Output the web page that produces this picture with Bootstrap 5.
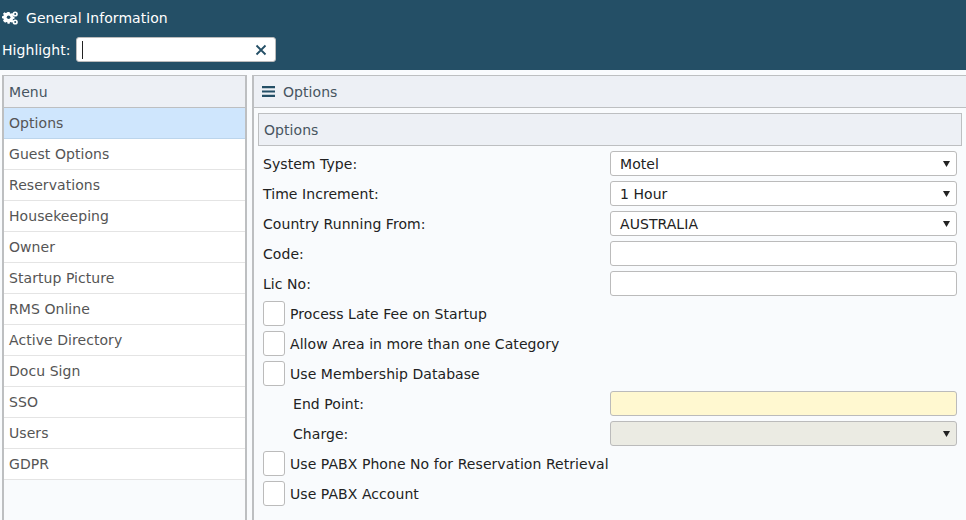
<!DOCTYPE html>
<html lang="en">
<head>
<meta charset="utf-8">
<title>General Information</title>
<link href="https://cdn.jsdelivr.net/npm/bootstrap@5.3.0/dist/css/bootstrap.min.css" rel="stylesheet">
<style>
html,body{height:520px;overflow:hidden}
body{background:#f9fbfd;font-family:"DejaVu Sans",sans-serif;font-size:14px;color:#222;line-height:20px;letter-spacing:.06px}
.app-top{background:#244f66;height:70px;color:#fff;padding:0 2px}
.app-title{height:36px;gap:8px;font-size:14px}
.app-title svg{width:16px;height:14px;flex:none}
.app-hl{gap:5px;font-size:14px;padding-top:1px}
.app-hl-box{width:200px;height:25px;background:#fff;border:1px solid #bbb;border-radius:3px;padding:0 8px 0 5px}
.caret-bar{width:1px;height:18px;background:#222}
.app-main{padding:5px 0 0 2px;gap:5px;height:450px}
.menu-col{width:245px;flex:none;border:solid #bdbfc1;border-width:1px 2px 0 2px}
.menu-head{height:32px;background:#edf0f5;border-bottom:1px solid #bdbfc1;padding:0 5px;color:#47555f;display:flex;align-items:center}
.menu-list .list-group-item{height:31px;padding:0 5px;background:#fff;border:0;border-bottom:1px solid #e4e4e4;color:#555;font-size:14px;line-height:30px;border-radius:0}
.menu-list .list-group-item.active{background:#cfe6fd;color:#555;border-bottom-color:#bcd5ec}
.pane{flex:1;border-left:2px solid #bdbfc1;min-width:0}
.pane-head{height:33px;border-top:1px solid #bdbfc1;border-bottom:1px solid #bdbfc1;background:#edf0f5;color:#47555f;gap:8px;padding-left:8px}
.pane-head svg{width:13px;height:11px}
.pane-body{padding:5px 4px 0 4px}
.sect{height:33px;border:1px solid #bdbfc1;background:#edf0f5;color:#47555f;padding:0 5px;margin-bottom:5px}
.frow{height:25px;margin-bottom:5px;padding:0 5px;display:flex;align-items:center}
.frow-label{flex:1;min-width:0;white-space:nowrap}
.frow-in{padding-left:30px}
.fctl{width:347px;height:25px;flex:none;background:#fff;border:1px solid #bbb;border-radius:3px;padding:0 9px;color:#222;display:flex;align-items:center;justify-content:space-between;font-size:14px}
.fctl-note{background:#fff8d0}
.fctl-off{background:#ebebe3}
.fctl-arrow{width:7px;height:7px;flex:none;margin-right:-3px}
.cbx{width:22px;height:25px;flex:none;background:#fff;border:1px solid #bbb;border-radius:3px;margin-right:5px}
</style>
</head>
<body>
<header class="app-top">
  <div class="app-title d-flex align-items-center">
    <svg viewBox="0 0 16 14" aria-hidden="true"><g fill="#fff"><path d="M5.6 2.4h2l.3 1.4 1 .4 1.2-.8 1.4 1.4-.8 1.2.4 1 1.4.3v2l-1.4.3-.4 1 .8 1.2-1.4 1.4-1.2-.8-1 .4-.3 1.4h-2l-.3-1.4-1-.4-1.2.8L1 11.2l.8-1.2-.4-1L0 8.7v-2l1.4-.3.4-1L1 4.2l1.400-1.400 1.200.8 1-.4z" transform="translate(0 -1.500)"/><circle cx="13.200" cy="3" r="2.600"/><circle cx="13.200" cy="11" r="2.600"/></g><circle cx="6.600" cy="6.200" r="1.800" fill="#244f66"/><circle cx="13.200" cy="3" r="1" fill="#244f66"/><circle cx="13.200" cy="11" r="1" fill="#244f66"/></svg>
    <span>General Information</span>
  </div>
  <div class="app-hl d-flex align-items-center">
    <label>Highlight:</label>
    <div class="app-hl-box d-flex align-items-center justify-content-between">
      <span class="caret-bar"></span>
      <svg width="12" height="12" viewBox="0 0 12 12" aria-hidden="true"><path d="M1.500 1.500l9 9M10.500 1.500l-9 9" stroke="#244f66" stroke-width="1.800" fill="none"/></svg>
    </div>
  </div>
</header>
<main class="app-main d-flex">
  <aside class="menu-col">
    <div class="menu-head">Menu</div>
    <div class="list-group menu-list">
      <a class="list-group-item active">Options</a>
      <a class="list-group-item">Guest Options</a>
      <a class="list-group-item">Reservations</a>
      <a class="list-group-item">Housekeeping</a>
      <a class="list-group-item">Owner</a>
      <a class="list-group-item">Startup Picture</a>
      <a class="list-group-item">RMS Online</a>
      <a class="list-group-item">Active Directory</a>
      <a class="list-group-item">Docu Sign</a>
      <a class="list-group-item">SSO</a>
      <a class="list-group-item">Users</a>
      <a class="list-group-item">GDPR</a>
    </div>
  </aside>
  <section class="pane">
    <div class="pane-head d-flex align-items-center">
      <svg viewBox="0 0 13 11" aria-hidden="true"><path d="M0 0h13v2.200H0zM0 4.400h13v2.200H0zM0 8.800h13V11H0z" fill="#244f66"/></svg>
      <span>Options</span>
    </div>
    <div class="pane-body">
      <div class="sect d-flex align-items-center">Options</div>
      <div class="frow"><span class="frow-label">System Type:</span><div class="fctl"><span>Motel</span><svg class="fctl-arrow" viewBox="0 0 7 7"><path d="M0 1h7L3.500 7z" fill="#222"/></svg></div></div>
      <div class="frow"><span class="frow-label">Time Increment:</span><div class="fctl"><span>1 Hour</span><svg class="fctl-arrow" viewBox="0 0 7 7"><path d="M0 1h7L3.500 7z" fill="#222"/></svg></div></div>
      <div class="frow"><span class="frow-label">Country Running From:</span><div class="fctl"><span>AUSTRALIA</span><svg class="fctl-arrow" viewBox="0 0 7 7"><path d="M0 1h7L3.500 7z" fill="#222"/></svg></div></div>
      <div class="frow"><span class="frow-label">Code:</span><div class="fctl"></div></div>
      <div class="frow"><span class="frow-label">Lic No:</span><div class="fctl"></div></div>
      <div class="frow"><span class="cbx"></span><span class="frow-label">Process Late Fee on Startup</span></div>
      <div class="frow"><span class="cbx"></span><span class="frow-label">Allow Area in more than one Category</span></div>
      <div class="frow"><span class="cbx"></span><span class="frow-label">Use Membership Database</span></div>
      <div class="frow"><span class="frow-label frow-in">End Point:</span><div class="fctl fctl-note"></div></div>
      <div class="frow"><span class="frow-label frow-in">Charge:</span><div class="fctl fctl-off justify-content-end"><svg class="fctl-arrow" viewBox="0 0 7 7"><path d="M0 1h7L3.500 7z" fill="#222"/></svg></div></div>
      <div class="frow"><span class="cbx"></span><span class="frow-label">Use PABX Phone No for Reservation Retrieval</span></div>
      <div class="frow"><span class="cbx"></span><span class="frow-label">Use PABX Account</span></div>
    </div>
  </section>
</main>
<script src="https://cdn.jsdelivr.net/npm/bootstrap@5.3.0/dist/js/bootstrap.bundle.min.js"></script>
</body>
</html>
